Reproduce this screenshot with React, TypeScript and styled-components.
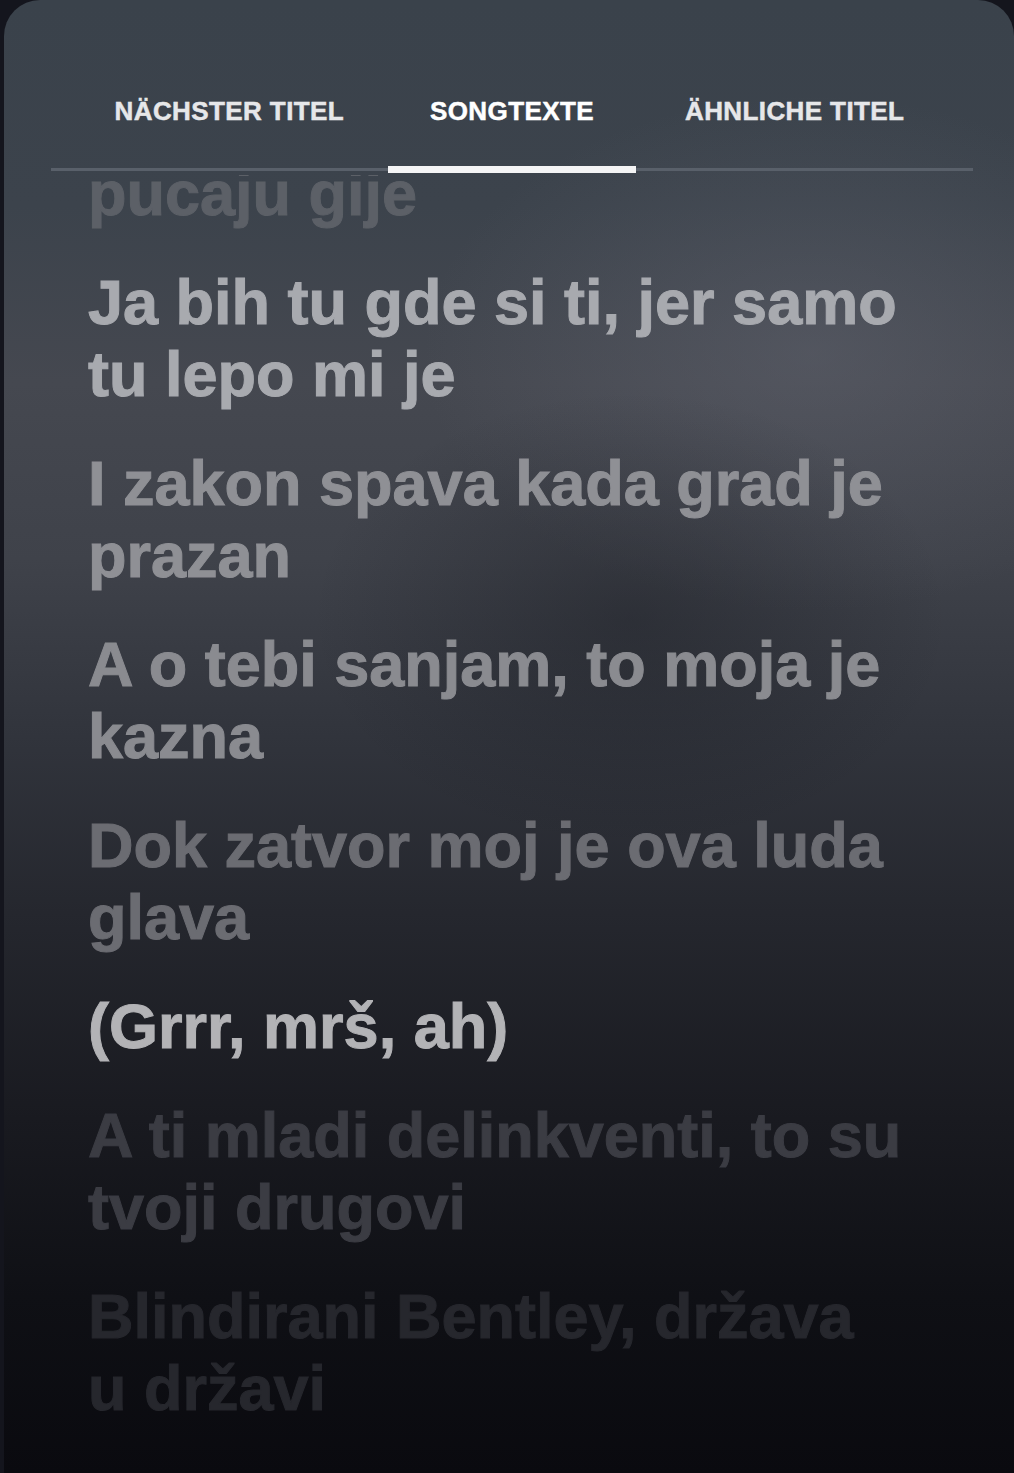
import React from 'react';
import styled, { createGlobalStyle } from 'styled-components';

const GlobalStyle = createGlobalStyle`
  html, body {
    margin: 0;
    padding: 0;
    background: #14151d;
  }
  body {
    font-family: "Liberation Sans", Arial, sans-serif;
  }
`;

const Screen = styled.div`
  margin-left: 4px;
  height: 1473px;
  display: flex;
  flex-direction: column;
  overflow: hidden;
  border-radius: 36px 36px 0 0;
  background:
    radial-gradient(ellipse 45% 22% at 62% 42%, rgba(20, 22, 28, 0.35), rgba(20, 22, 28, 0) 70%),
    radial-gradient(ellipse 55% 25% at 80% 24%, rgba(110, 112, 124, 0.35), rgba(110, 112, 124, 0) 70%),
    linear-gradient(180deg, #3a424b 0%, #3c434c 14%, #454850 26%, #3f424a 38%, #31343c 50%, #25272e 62%, #191a20 76%, #0f1015 88%, #0a0a0f 100%);
`;

const Header = styled.div`
  padding: 96px 41px 0 47px;
`;

const TabRow = styled.div`
  display: grid;
  grid-template-columns: repeat(3, 1fr);
  padding: 0 37px;
  border-bottom: 3px solid #59606a;
`;

const Tab = styled.div<{ $active?: boolean }>`
  position: relative;
  text-align: center;
  padding-bottom: 42px;
  font-size: 26px;
  line-height: 30px;
  font-weight: 700;
  letter-spacing: 0.4px;
  color: ${({ $active }) => ($active ? '#ffffff' : '#e6e7e9')};
  -webkit-text-stroke: 0.5px currentColor;
  white-space: nowrap;

  &::after {
    content: '';
    display: ${({ $active }) => ($active ? 'block' : 'none')};
    position: absolute;
    left: 17px;
    right: 17px;
    bottom: -5px;
    height: 7px;
    background: #f4f4f5;
  }
`;

const Viewport = styled.div`
  flex: 1;
  margin-top: 4px;
  overflow: hidden;
`;

const LyricList = styled.div`
  display: flex;
  flex-direction: column;
  gap: 37px;
  margin-top: -18px;
  padding-left: 84px;
  width: 821px;
`;

const Line = styled.p<{ $tone: string }>`
  margin: 0;
  font-size: 63px;
  line-height: 72px;
  font-weight: 700;
  letter-spacing: 0;
  color: ${({ $tone }) => $tone};
  -webkit-text-stroke: 1px ${({ $tone }) => $tone};
`;

const tabs = [
  { label: 'NÄCHSTER TITEL' },
  { label: 'SONGTEXTE', active: true },
  { label: 'ÄHNLICHE TITEL' },
];

const lyrics = [
  { text: 'pucaju gije', tone: '#5c6067' },
  { text: 'Ja bih tu gde si ti, jer samo tu lepo mi je', tone: '#a8aaaf' },
  { text: 'I zakon spava kada grad je prazan', tone: '#8f9095' },
  { text: 'A o tebi sanjam, to moja je kazna', tone: '#8a8b90' },
  { text: 'Dok zatvor moj je ova luda glava', tone: '#6b6c72' },
  { text: '(Grrr, mrš, ah)', tone: '#b3b3b6' },
  { text: 'A ti mladi delinkventi, to su tvoji drugovi', tone: '#3b3c43' },
  { text: 'Blindirani Bentley, država u državi', tone: '#26272d' },
];

export default function App() {
  return (
    <>
      <GlobalStyle />
      <Screen>
        <Header>
          <TabRow>
            {tabs.map((tab) => (
              <Tab key={tab.label} $active={tab.active}>
                {tab.label}
              </Tab>
            ))}
          </TabRow>
        </Header>
        <Viewport>
          <LyricList>
            {lyrics.map((line, index) => (
              <Line key={index} $tone={line.tone}>
                {line.text}
              </Line>
            ))}
          </LyricList>
        </Viewport>
      </Screen>
    </>
  );
}
